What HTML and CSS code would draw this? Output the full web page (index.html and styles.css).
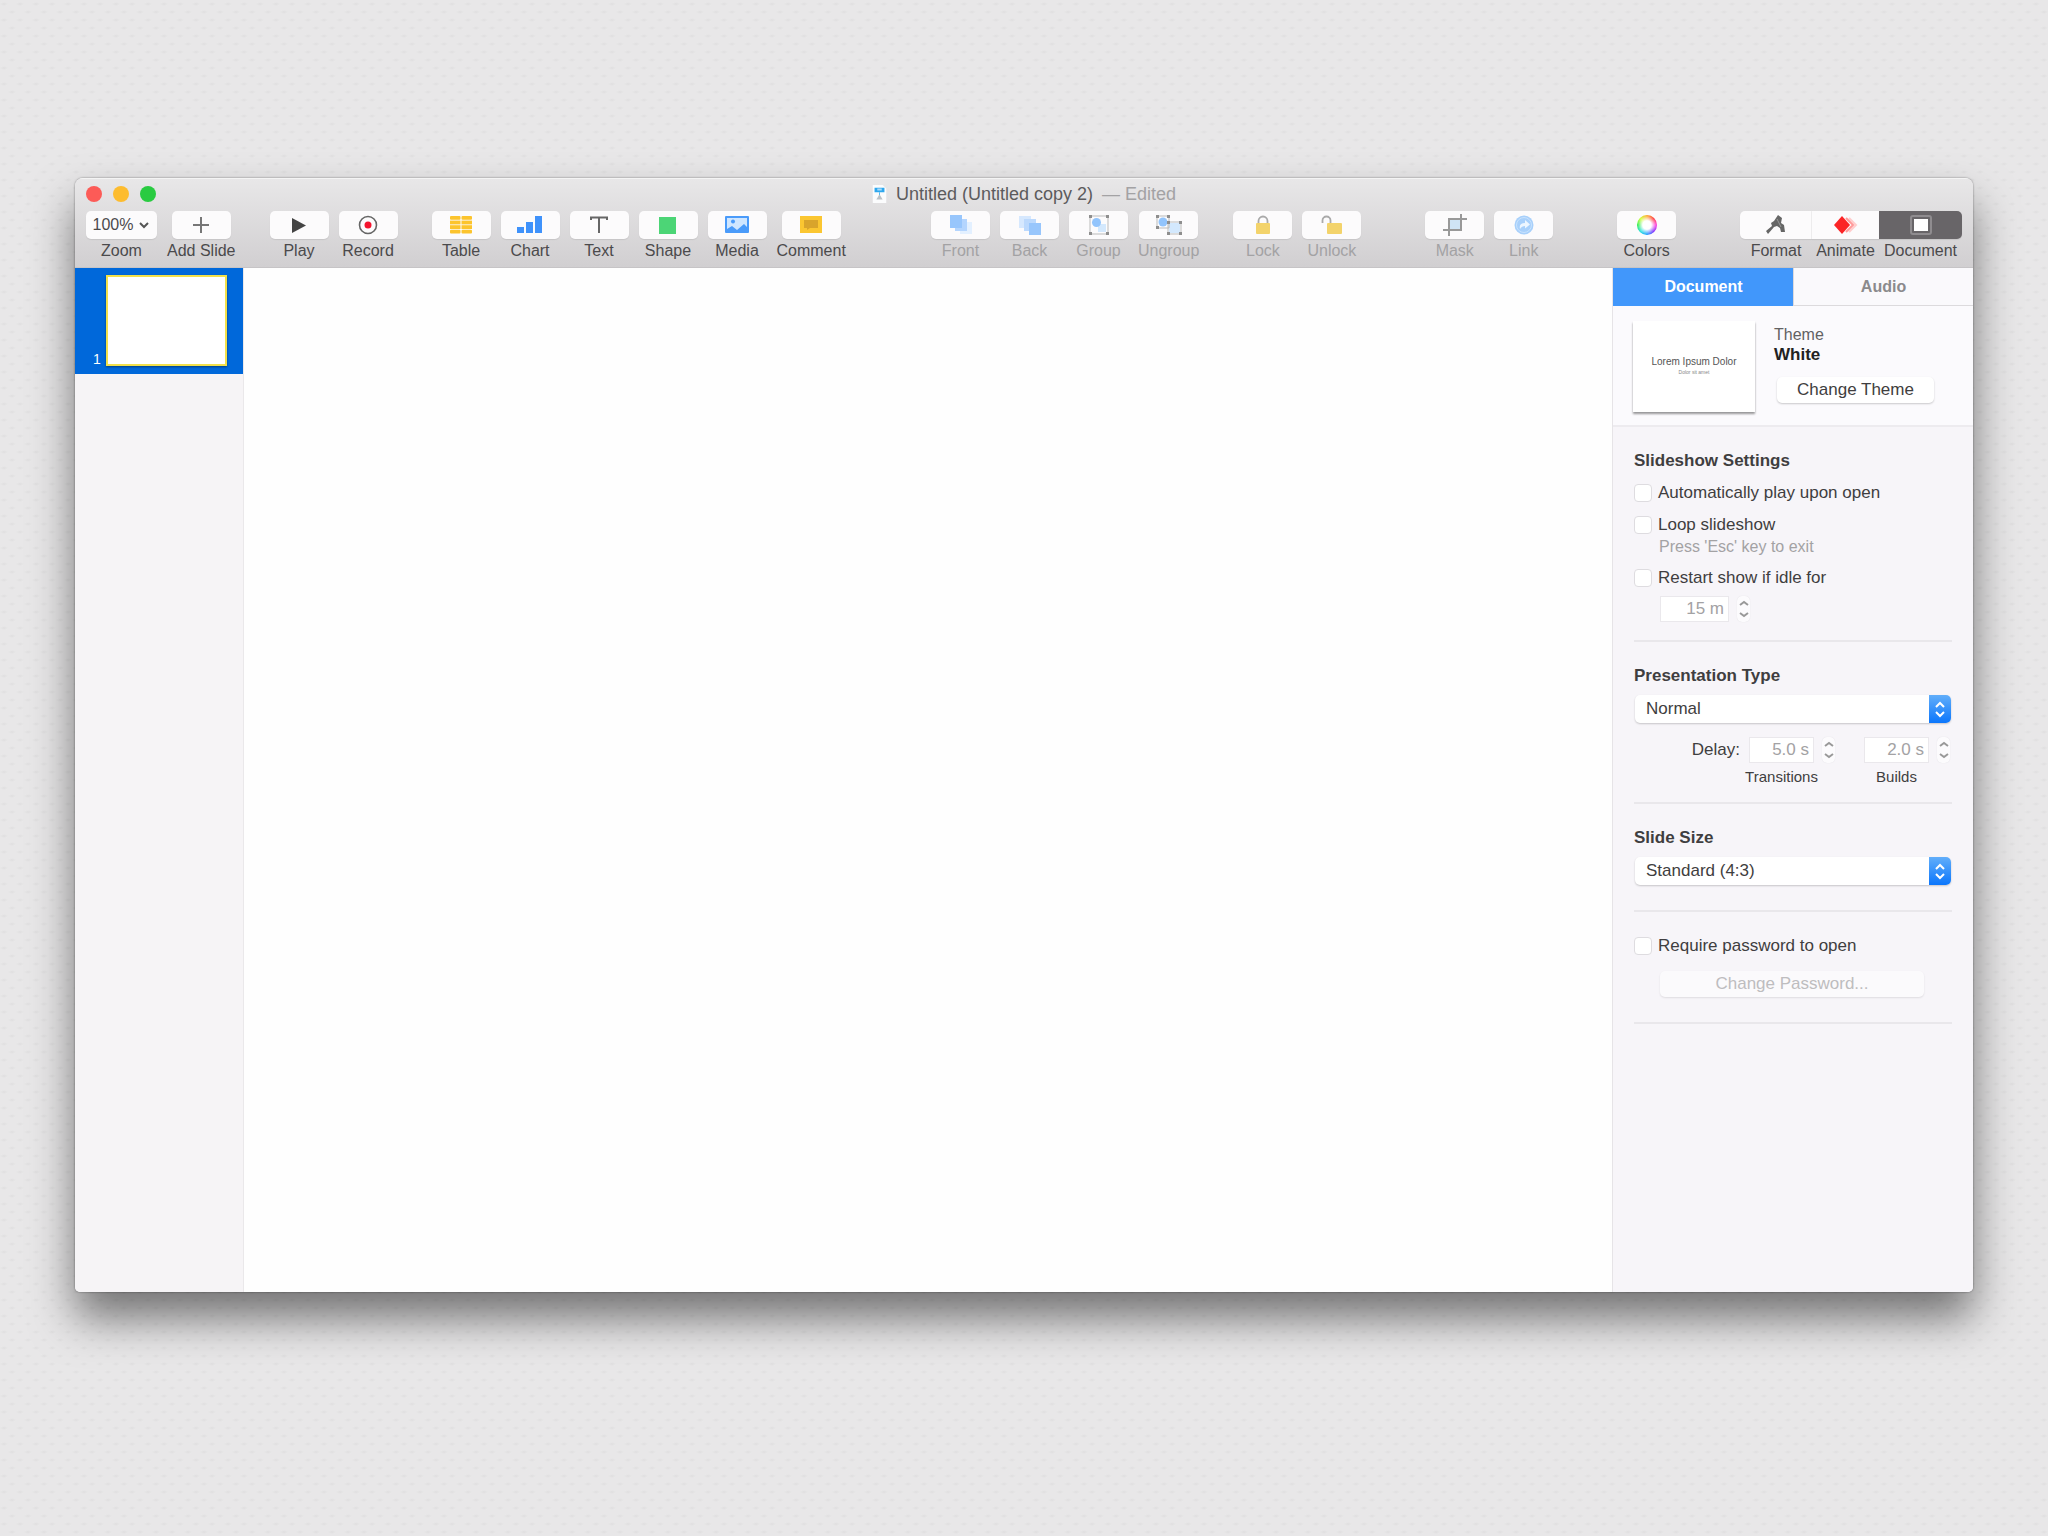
FILE: index.html
```html
<!DOCTYPE html>
<html lang="en">
<head>
<meta charset="utf-8">
<meta name="viewport" content="width=device-width, initial-scale=1">
<title>Untitled (Untitled copy 2)</title>
<link rel="stylesheet" href="styles.css">
</head>
<body>
<main class="window">
  <header class="chrome">
    <div class="titlebar">
      <div class="lights">
        <button class="light light-close" aria-label="Close"></button>
        <button class="light light-min" aria-label="Minimize"></button>
        <button class="light light-zoom" aria-label="Full screen"></button>
      </div>
      <h1 class="title">
        <svg class="doc-icon" width="15" height="18" viewBox="0 0 15 20"><path d="M0 0h11l4 4v16H0z" fill="#fbfcfd"/><path d="M2 3h11v5H2z" fill="#2ea7ee"/><path d="M5 4h5v2H5z" fill="#a9dcfa"/><path d="M7 8h1v4H7z" fill="#4ab4ef"/><path d="M7 11l-3 5h7l-3-5z" fill="#b9c0c6"/></svg>
        <span>Untitled (Untitled copy 2)</span>
        <span class="edited">— Edited</span>
      </h1>
    </div>
    <nav class="toolbar" aria-label="Toolbar">
      <div class="group">
        <button class="tool tool-wide"><span class="face">100%<svg width="12" height="8" viewBox="0 0 12 8"><path d="M2 2l4 4 4-4" fill="none" stroke="#555" stroke-width="2"/></svg></span><span>Zoom</span></button>
        <button class="tool"><span class="face"><svg width="18" height="18" viewBox="0 0 18 18"><path d="M9 1v16M1 9h16" stroke="#777" stroke-width="2"/></svg></span><span>Add Slide</span></button>
      </div>
      <div class="group">
        <button class="tool"><span class="face"><svg width="16" height="17" viewBox="0 0 16 17"><path d="M1 1l14 7.500L1 16z" fill="#444"/></svg></span><span>Play</span></button>
        <button class="tool"><span class="face"><svg width="20" height="20" viewBox="0 0 20 20"><circle cx="10" cy="10" r="8.500" fill="none" stroke="#666" stroke-width="1.600"/><circle cx="10" cy="10" r="3.500" fill="#f5142e"/></svg></span><span>Record</span></button>
      </div>
      <div class="group">
        <button class="tool"><span class="face"><svg width="22" height="18" viewBox="0 0 22 18"><g fill="#fcc42d"><rect width="10.500" height="3.800" rx="1"/><rect x="11.500" width="10.500" height="3.800" rx="1"/><rect y="4.600" width="10.500" height="3.800"/><rect x="11.500" y="4.600" width="10.500" height="3.800"/><rect y="9.200" width="10.500" height="3.800"/><rect x="11.500" y="9.200" width="10.500" height="3.800"/><rect y="13.800" width="10.500" height="3.800" rx="1"/><rect x="11.500" y="13.800" width="10.500" height="3.800" rx="1"/></g></svg></span><span>Table</span></button>
        <button class="tool"><span class="face"><svg width="26" height="18" viewBox="0 0 26 18"><g fill="#3f92fb"><rect y="11" width="7" height="6"/><rect x="9" y="6" width="7" height="11"/><rect x="18" width="7" height="17"/></g></svg></span><span>Chart</span></button>
        <button class="tool"><span class="face"><svg width="18" height="18" viewBox="0 0 18 18"><path d="M1 4V1.500h16V4M9 1.500V17" fill="none" stroke="#666" stroke-width="2"/></svg></span><span>Text</span></button>
        <button class="tool"><span class="face"><svg width="18" height="18" viewBox="0 0 18 18"><rect width="17" height="17" y="1" fill="#4cd576"/></svg></span><span>Shape</span></button>
        <button class="tool"><span class="face"><svg width="24" height="18" viewBox="0 0 24 18"><rect width="24" height="17" rx="1" fill="#4a9bfa"/><path d="M2 2h20v9l-3-3-7 6-5-4-5 3z" fill="#cfe6ff"/><circle cx="8" cy="5.500" r="2" fill="#4a9bfa"/></svg></span><span>Media</span></button>
        <button class="tool"><span class="face"><svg width="22" height="18" viewBox="0 0 22 18"><rect width="22" height="17" fill="#fbc631"/><path d="M4 4h14v8h-8l-3 2v-2H4z" fill="#d9a42b"/></svg></span><span>Comment</span></button>
      </div>
      <div class="spacer spacer-large"></div>
      <div class="group">
        <button class="tool" disabled><span class="face"><svg width="24" height="20" viewBox="0 0 24 20"><path d="M11 7h12v12H11z" fill="#e3f0ff"/><path d="M6 4h12v12H6z" fill="#b4d5fe"/><path d="M1 0h12v13H1z" fill="#98c6fc"/></svg></span><span>Front</span></button>
        <button class="tool" disabled><span class="face"><svg width="24" height="20" viewBox="0 0 24 20"><path d="M1 1h12v12H1z" fill="#d6e8fe"/><path d="M6 4h12v12H6z" fill="#bcd9fd"/><path d="M11 8h12v12H11z" fill="#98c6fc"/></svg></span><span>Back</span></button>
        <button class="tool" disabled><span class="face"><svg width="22" height="22" viewBox="0 0 22 22"><path d="M10 10h8v8h-8z" fill="#d3e8fd"/><circle cx="8.500" cy="8.500" r="4.500" fill="#92c4fc"/><path d="M2 2h18v18H2z" fill="none" stroke="#bbb"/><g fill="#8e8e8e"><path d="M1 1h3v3H1zM18 1h3v3h-3zM1 18h3v3H1zM18 18h3v3h-3z"/></g></svg></span><span>Group</span></button>
        <button class="tool" disabled><span class="face"><svg width="28" height="22" viewBox="0 0 28 22"><path d="M14 9h11v10H14z" fill="#d3e8fd"/><circle cx="8" cy="8" r="4.500" fill="#92c4fc"/><path d="M2 2h12v12H2zM13 8h13v12H13z" fill="none" stroke="#bbb"/><path d="M1 1h3v3H1zM12 1h3v3h-3zM1 12h3v3H1zM12 7h3v3h-3zM24 7h3v3h-3zM12 18h3v3h-3zM24 18h3v3h-3z" fill="#8e8e8e"/></svg></span><span>Ungroup</span></button>
      </div>
      <div class="group">
        <button class="tool" disabled><span class="face"><svg width="16" height="20" viewBox="0 0 16 20"><path d="M3.500 10V6a4.500 4.500 0 0 1 9 0v4" fill="none" stroke="#aaa" stroke-width="1.800"/><rect x="1" y="8" width="14" height="11" rx="1" fill="#f3d36b"/></svg></span><span>Lock</span></button>
        <button class="tool" disabled><span class="face"><svg width="21" height="20" viewBox="0 0 21 20"><path d="M1.500 8V5.500a4 4 0 0 1 8 0V9" fill="none" stroke="#aaa" stroke-width="1.800"/><rect x="6" y="8" width="15" height="11" rx="1" fill="#f3d36b"/></svg></span><span>Unlock</span></button>
      </div>
      <div class="spacer"></div>
      <div class="group">
        <button class="tool" disabled><span class="face"><svg width="24" height="22" viewBox="0 0 24 22"><path d="M7 6h10v10H7z" fill="#cfe4f5"/><path d="M6 22V5h18M0 16h18V0" fill="none" stroke="#999" stroke-width="2"/></svg></span><span>Mask</span></button>
        <button class="tool" disabled><span class="face"><svg width="20" height="20" viewBox="0 0 20 20"><circle cx="10" cy="10" r="9.500" fill="#a8d0fb"/><path d="M6 14c-1-4 1-6 5-6V5l5 4.500-5 4V11c-2 0-4 1-5 3z" fill="#edf6ff"/><circle cx="10" cy="10" r="7.500" fill="none" stroke="#c8e2fd"/></svg></span><span>Link</span></button>
      </div>
      <div class="spacer"></div>
      <div class="group">
        <button class="tool"><span class="face"><span class="wheel"></span></span><span>Colors</span></button>
      </div>
      <div class="spacer"></div>
      <div class="segments">
        <button class="tool seg seg-first"><span class="face"><svg width="22" height="20" viewBox="0 0 22 20"><path d="M13 0l-4 6-3 2 1 3-6 5 2 3 6-7 3-1 3 2 1 4h4l-1-7-3-2 1-5z" fill="#666"/><path d="M12 4l4 8" stroke="#999"/></svg></span><span>Format</span></button>
        <button class="tool seg seg-mid"><span class="face"><svg width="24" height="20" viewBox="0 0 24 20"><path d="M15 3l7 7-7 7" fill="none" stroke="#fcc" stroke-width="2"/><path d="M12 3l7 7-7 7" fill="none" stroke="#f99" stroke-width="2"/><path d="M8 1l8 9-8 9-8-9z" fill="#fb2426"/></svg></span><span>Animate</span></button>
        <button class="tool seg seg-last" aria-pressed="true"><span class="face"><svg width="22" height="20" viewBox="0 0 22 20"><rect x="1" y="1" width="20" height="18" rx="2" fill="none" stroke="#8f8c8f" stroke-width="2"/><rect x="4" y="4" width="14" height="12" fill="#fff"/></svg></span><span>Document</span></button>
      </div>
    </nav>
  </header>

  <div class="workspace">
    <aside class="slides" aria-label="Slides">
      <button class="slide"><span class="slide-number">1</span><span class="slide-thumb"></span></button>
    </aside>
    <section class="canvas" aria-label="Slide canvas"></section>
    <aside class="inspector" aria-label="Inspector">
      <div class="tabs" role="tablist">
        <button class="tab" role="tab" aria-selected="true">Document</button>
        <button class="tab" role="tab" aria-selected="false">Audio</button>
      </div>
      <div class="theme">
        <div class="theme-thumb"><span>Lorem Ipsum Dolor</span><small>Dolor sit amet</small></div>
        <div class="theme-info">
          <span class="theme-label">Theme</span>
          <strong>White</strong>
          <button class="push">Change Theme</button>
        </div>
      </div>
      <div class="sections">
        <section class="section slideshow">
          <h2>Slideshow Settings</h2>
          <label class="check"><input type="checkbox">Automatically play upon open</label>
          <label class="check"><input type="checkbox">Loop slideshow</label>
          <p class="hint">Press 'Esc' key to exit</p>
          <label class="check"><input type="checkbox">Restart show if idle for</label>
          <div class="number number-idle">
            <input type="text" value="15 m" aria-label="Idle time" disabled>
            <button class="stepper" aria-label="Change idle time" disabled><svg width="13" height="26" viewBox="0 0 13 26"><path d="M3 9l4-3 4 3M3 17l4 3 4-3" fill="none" stroke="#999" stroke-width="2"/></svg></button>
          </div>
        </section>
        <section class="section presentation">
          <h2><label for="type">Presentation Type</label></h2>
          <div class="popup">
            <select id="type"><option>Normal</option></select>
            <svg class="cap" width="22" height="28" viewBox="0 0 22 28"><path d="M7 12l4-4 4 4M7 17l4 4 4-4" fill="none" stroke="#fff" stroke-width="2"/></svg>
          </div>
          <div class="delay">
            <span class="delay-label">Delay:</span>
            <div class="number">
              <input id="transitions" type="text" value="5.0 s" disabled>
              <button class="stepper" aria-label="Change transition delay" disabled><svg width="13" height="26" viewBox="0 0 13 26"><path d="M3 9l4-3 4 3M3 17l4 3 4-3" fill="none" stroke="#999" stroke-width="2"/></svg></button>
              <label for="transitions">Transitions</label>
            </div>
            <div class="number number-last">
              <input id="builds" type="text" value="2.0 s" disabled>
              <button class="stepper" aria-label="Change build delay" disabled><svg width="13" height="26" viewBox="0 0 13 26"><path d="M3 9l4-3 4 3M3 17l4 3 4-3" fill="none" stroke="#999" stroke-width="2"/></svg></button>
              <label for="builds">Builds</label>
            </div>
          </div>
        </section>
        <section class="section size">
          <h2><label for="size">Slide Size</label></h2>
          <div class="popup">
            <select id="size"><option>Standard (4:3)</option></select>
            <svg class="cap" width="22" height="28" viewBox="0 0 22 28"><path d="M7 12l4-4 4 4M7 17l4 4 4-4" fill="none" stroke="#fff" stroke-width="2"/></svg>
          </div>
        </section>
        <section class="section password">
          <label class="check"><input type="checkbox">Require password to open</label>
          <button class="push push-password" disabled>Change Password...</button>
        </section>
      </div>
    </aside>
  </div>
</main>
</body>
</html>
```
FILE: styles.css
```css
* {
  box-sizing: border-box;
}

body {
  margin: 0;
  min-height: 100vh;
  display: flex;
  padding: 178px 75px 244px;
  color: #3f3e40;
  font-family: "Liberation Sans", Arial, sans-serif;
  font-size: 17px;
  line-height: 20px;
  background-color: #e8e7e8;
  background-image:
    radial-gradient(ellipse 4px 2px at 4px 4px, #dfdfdf, transparent),
    radial-gradient(ellipse 4px 2px at 12px 12px, #dfdfdf, transparent);
  background-size: 16px 16px;
}

button,
input,
select {
  margin: 0;
  padding: 0;
  border: 0;
  background: none;
  color: inherit;
  font: inherit;
}

h1,
h2,
p {
  margin: 0;
  font-size: inherit;
}

svg {
  display: block;
  flex: none;
}

.window {
  flex: 1;
  min-width: 0;
  display: flex;
  flex-direction: column;
  overflow: hidden;
  border-radius: 8px 8px 5px 5px;
  background: #f7f5f9;
  box-shadow: 0 26px 44px rgba(0, 0, 0, .5), 0 0 2px rgba(0, 0, 0, .5);
}

/* Title bar and toolbar */
.chrome {
  height: 90px;
  background: linear-gradient(#e8e7e8, #d1cfd1);
  border-top: 1px solid #f4f4f4;
  border-bottom: 1px solid #c6c4c6;
}

.titlebar {
  display: grid;
  grid-template-columns: 1fr auto 1fr;
  align-items: center;
  height: 32px;
  padding: 0 11px 2px;
}

.lights {
  display: flex;
  gap: 11px;
}

.light {
  width: 16px;
  height: 16px;
  border-radius: 50%;
}

.light-close { background: #fc5b57; }
.light-min { background: #fdbc2f; }
.light-zoom { background: #29cb41; }

.title {
  display: flex;
  align-items: center;
  gap: 9px;
  color: #5c5b5d;
  font-size: 18px;
  font-weight: 400;
}

.edited {
  color: #a3a2a4;
}

.toolbar {
  display: flex;
  padding: 0 11px;
}

.group {
  display: flex;
  gap: 10px;
}

.group + .group {
  margin-left: 34px;
}

.spacer {
  flex: 3;
}

.spacer-large {
  flex: 4;
}

.tool {
  display: flex;
  flex-direction: column;
  align-items: center;
  gap: 2px;
  min-width: 59px;
  color: #4b4a4c;
  font-size: 16px;
  white-space: nowrap;
}

.tool:disabled {
  color: #a3a2a4;
}

.face {
  display: flex;
  align-items: center;
  justify-content: center;
  gap: 5px;
  width: 59px;
  height: 28px;
  border-radius: 5px;
  background: #fcfbfc;
  box-shadow: 0 1px 1px rgba(0, 0, 0, .08);
}

.tool-wide .face {
  width: 71px;
}

.wheel {
  width: 20px;
  height: 20px;
  border-radius: 50%;
  background:
    radial-gradient(circle, #fff 30%, transparent 70%),
    conic-gradient(#ffa51f, #f33, #f3d, #72f, #19f, #1dd, #2e4, #cf2, #ffa51f);
}

.segments {
  display: flex;
}

.seg .face {
  width: 100%;
  border-radius: 0;
}

.seg-first { width: 72px; }
.seg-mid { width: 67px; }
.seg-last { width: 83px; }

.seg-first .face {
  border-right: 1px solid #f0eff0;
  border-radius: 5px 0 0 5px;
}

.seg-last .face {
  border-radius: 0 5px 5px 0;
  background: #686568;
}

/* Workspace */
.workspace {
  flex: 1;
  display: grid;
  grid-template-columns: 169px 1fr 361px;
}

.slides {
  border-right: 1px solid #eae8ea;
  background: #f6f4f6;
}

.slide {
  display: flex;
  align-items: flex-end;
  justify-content: space-between;
  width: 100%;
  height: 106px;
  padding: 7px 16px 8px 18px;
  background: #0068da;
}

.slide-number {
  color: #fff;
  font-size: 14px;
  line-height: 14px;
}

.slide-thumb {
  width: 121px;
  height: 91px;
  border: 2px solid #f2e04a;
  background: #fff;
  box-shadow: 0 1px 2px rgba(0, 0, 0, .4);
}

.canvas {
  background: #fefefe;
}

.inspector {
  border-left: 1px solid #e6e4e7;
  background: #f7f5f9;
}

.tabs {
  display: grid;
  grid-template-columns: 1fr 1fr;
  height: 38px;
}

.tab {
  border-bottom: 1px solid #dcdadd;
  border-left: 1px solid #dcdadd;
  background: #faf9fc;
  color: #8b8a8c;
  font-size: 16px;
  font-weight: 700;
}

.tab[aria-selected="true"] {
  border-color: #4197fb;
  background: #4197fb;
  color: #fff;
}

.theme {
  display: flex;
  gap: 19px;
  padding: 15px 20px 13px;
  border-bottom: 2px solid #edebef;
  background: #fbfafd;
}

.theme-thumb {
  display: flex;
  flex-direction: column;
  align-items: center;
  justify-content: center;
  width: 122px;
  height: 91px;
  background: #fff;
  box-shadow: 0 2px 2px rgba(0, 0, 0, .4);
  color: #555;
  font-size: 10px;
  line-height: 10px;
  white-space: nowrap;
}

.theme-thumb small {
  color: #888;
  font-size: 5px;
}

.theme-info {
  display: flex;
  flex-direction: column;
  align-items: flex-start;
  padding-top: 4px;
}

.theme-label {
  color: #626163;
  font-size: 16px;
}

.theme-info strong {
  color: #222;
}

.push {
  height: 26px;
  border-radius: 5px;
  background: #fff;
  box-shadow: 0 1px 2px rgba(0, 0, 0, .2);
}

.theme-info .push {
  width: 157px;
  margin: 12px 0 0 3px;
}

.sections {
  padding: 0 21px;
}

.section {
  display: flex;
  flex-direction: column;
  padding-top: 24px;
  border-bottom: 2px solid #e9e7eb;
}

.slideshow { padding-bottom: 18px; }
.presentation { padding-bottom: 15px; }
.size { padding-bottom: 25px; }
.password { padding-bottom: 25px; }

.check {
  display: flex;
  align-items: center;
  gap: 6px;
}

.check + .check {
  margin-top: 12px;
}

.slideshow h2 {
  margin-bottom: 12px;
}

.check input {
  appearance: none;
  width: 18px;
  height: 18px;
  border: 1px solid #dedce0;
  border-radius: 4px;
  background: #fff;
}

.hint {
  margin: 2px 0 11px 25px;
  color: #a3a2a4;
  font-size: 16px;
}

.number {
  display: grid;
  grid-template-columns: 65px 13px;
  gap: 4px 8px;
}

.number input {
  width: 100%;
  height: 26px;
  padding-right: 4px;
  border: 1px solid #eae8ec;
  background: #fff;
  color: #a3a2a4;
  text-align: right;
}

.number label {
  justify-self: center;
  font-size: 15px;
  white-space: nowrap;
}

.number-idle {
  grid-template-columns: 69px 13px;
  margin: 8px 0 0 26px;
}

.number-last {
  margin-left: 29px;
}

.stepper {
  height: 26px;
  border-radius: 5px;
  background: #fcfbfd;
  box-shadow: 0 0 1px rgba(0, 0, 0, .12);
}

.popup {
  display: grid;
  margin: 9px 1px 0;
  height: 28px;
}

.popup select,
.cap {
  grid-area: 1 / 1;
}

.popup select {
  appearance: none;
  width: 100%;
  padding-left: 11px;
  border-radius: 5px;
  background: #fff;
  box-shadow: 0 1px 2px rgba(0, 0, 0, .2);
}

.cap {
  justify-self: end;
  border-radius: 0 5px 5px 0;
  background: linear-gradient(#62aefa, #0b76fc);
  pointer-events: none;
}

.delay {
  display: flex;
  justify-content: flex-end;
  margin-top: 14px;
  padding-right: 2px;
}

.delay-label {
  margin: 3px 9px 0 0;
}

.push-password {
  width: 264px;
  margin: 15px 0 0 26px;
  background: #fbfafc;
  box-shadow: 0 1px 2px rgba(0, 0, 0, .1);
  color: #bebdbf;
}
```
